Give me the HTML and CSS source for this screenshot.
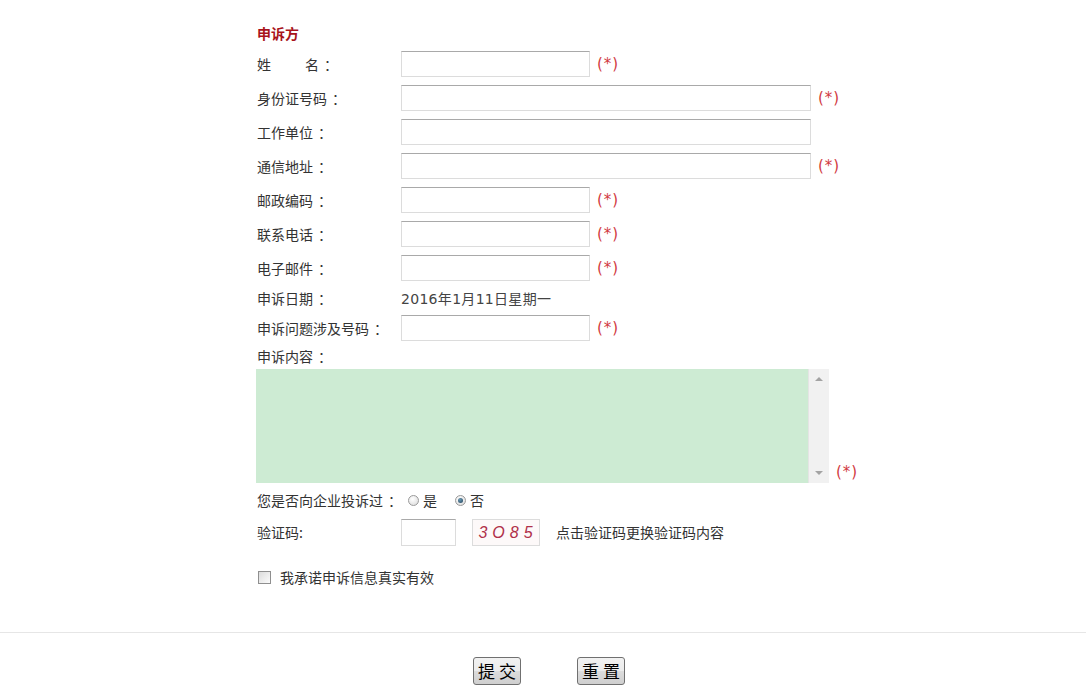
FILE: index.html
```html
<!DOCTYPE html>
<html lang="zh-CN">
<head>
<meta charset="utf-8">
<title>申诉方</title>
<link rel="stylesheet" href="styles.css">
</head>
<body>
<div class="form">
  <h2 class="title">申诉方</h2>
  <div class="row"><span class="label"><span class="xing">姓</span>名<span class="c">：</span></span><input class="inp short" type="text"><span class="req">(*)</span></div>
  <div class="row"><span class="label">身份证号码<span class="c">：</span></span><input class="inp long" type="text"><span class="req">(*)</span></div>
  <div class="row"><span class="label">工作单位<span class="c">：</span></span><input class="inp long" type="text"></div>
  <div class="row"><span class="label">通信地址<span class="c">：</span></span><input class="inp long" type="text"><span class="req">(*)</span></div>
  <div class="row"><span class="label">邮政编码<span class="c">：</span></span><input class="inp short" type="text"><span class="req">(*)</span></div>
  <div class="row"><span class="label">联系电话<span class="c">：</span></span><input class="inp short" type="text"><span class="req">(*)</span></div>
  <div class="row"><span class="label">电子邮件<span class="c">：</span></span><input class="inp short" type="text"><span class="req">(*)</span></div>
  <div class="row date-row"><span class="label">申诉日期<span class="c">：</span></span><span class="date">2016年1月11日星期一</span></div>
  <div class="row"><span class="label">申诉问题涉及号码<span class="c">：</span></span><input class="inp short" type="text"><span class="req">(*)</span></div>
  <div class="content-label">申诉内容<span class="c">：</span></div>
  <div class="content-row">
    <div class="area-wrap">
      <textarea class="area"></textarea>
      <div class="scrollbar"><span class="arrow up"></span><span class="arrow down"></span></div>
    </div>
    <span class="req area-req">(*)</span>
  </div>
  <div class="radio-row">
    <span>您是否向企业投诉过<span class="c">：</span></span>
    <span class="radio"></span><span class="opt">是</span>
    <span class="radio checked"></span><span>否</span>
  </div>
  <div class="row captcha-row"><span class="label">验证码:</span><input class="inp code" type="text"><span class="captcha">3O85</span><span class="hint">点击验证码更换验证码内容</span></div>
  <div class="agree"><span class="checkbox"></span><span>我承诺申诉信息真实有效</span></div>
</div>
<div class="footer">
  <button class="btn" type="button">提 交</button>
  <button class="btn" type="button">重 置</button>
</div>
</body>
</html>
```
FILE: styles.css
```css
html, body {
  margin: 0;
  padding: 0;
  background: #fff;
}
body {
  font-family: "Noto Sans CJK SC", "Liberation Sans", sans-serif;
  font-size: 14px;
  color: #333;
}
.c {
  display: inline-block;
  padding-left: 5px;
}
.form {
  width: 572px;
  margin: 0 auto;
  padding-top: 20px;
}
.title {
  margin: 0;
  height: 27px;
  line-height: 27px;
  font-size: 14px;
  font-weight: bold;
  color: #a8131b;
}
.row {
  display: flex;
  align-items: center;
  height: 34px;
}
.label {
  width: 144px;
  flex: none;
  line-height: 20px;
  white-space: nowrap;
}
.xing {
  display: inline-block;
  width: 48px;
}
.inp {
  flex: none;
  box-sizing: border-box;
  height: 26px;
  border: 1px solid #dcdcdc;
  border-top-color: #a9a9a9;
  background: #fff;
  padding: 0 3px;
  margin: 0;
  font: inherit;
}
.short { width: 189px; }
.long { width: 410px; }
.req {
  flex: none;
  color: #d13a3f;
  margin-left: 7px;
  font-size: 15px;
  font-family: "DejaVu Sans", sans-serif;
  letter-spacing: 1px;
  white-space: nowrap;
}
.date-row { height: 26px; }
.date {
  color: #444;
  font-family: "DejaVu Sans", "Noto Sans CJK SC", sans-serif;
  font-size: 14px;
  letter-spacing: 0.3px;
}
.content-label {
  height: 24px;
  line-height: 22px;
}
.content-row {
  display: flex;
  align-items: flex-end;
  margin-left: -1px;
  width: 640px;
}
.area-wrap {
  flex: none;
  display: flex;
  height: 114px;
  width: 573px;
}
.area {
  box-sizing: border-box;
  flex: 1;
  height: 114px;
  margin: 0;
  border: none;
  background: #cdebd3;
  resize: none;
  padding: 2px;
  font: inherit;
}
.scrollbar {
  flex: none;
  width: 21px;
  background: #f1f1f1;
  border-left: 1px solid #e4e4e4;
  box-sizing: border-box;
  display: flex;
  flex-direction: column;
  justify-content: space-between;
  align-items: center;
  padding: 8px 0;
}
.arrow {
  width: 0;
  height: 0;
  border-left: 4px solid transparent;
  border-right: 4px solid transparent;
}
.arrow.up { border-bottom: 4px solid #a3a3a3; }
.arrow.down { border-top: 4px solid #a3a3a3; }
.area-req {
  margin-left: 7px;
  line-height: 20px;
  margin-bottom: 1px;
}
.radio-row {
  display: flex;
  align-items: center;
  height: 33px;
}
.radio {
  box-sizing: border-box;
  width: 11px;
  height: 11px;
  border-radius: 50%;
  border: 1px solid #9a9a9a;
  background: radial-gradient(circle at 40% 35%, #fff, #d8d8d8);
  margin: 2px 4px 0 6px;
  display: flex;
  align-items: center;
  justify-content: center;
}
.radio.checked {
  margin-left: 18px;
  margin-right: 4px;
}
.radio.checked::after {
  content: "";
  width: 5px;
  height: 5px;
  border-radius: 50%;
  background: radial-gradient(circle at 40% 35%, #6a9ab6, #1f3f56);
}
.captcha-row { height: 32px; }
.code { width: 55px; height: 27px; }
.captcha {
  flex: none;
  box-sizing: border-box;
  width: 68px;
  height: 27px;
  margin-left: 16px;
  border: 1px solid #dcdcdc;
  background: #fdf9f9;
  color: #b0304a;
  font-family: "Liberation Sans", sans-serif;
  font-style: italic;
  font-size: 16px;
  letter-spacing: 5px;
  text-indent: 4px;
  text-align: center;
  line-height: 25px;
}
.hint { margin-left: 16px; }
.agree {
  display: flex;
  align-items: center;
  margin-top: 16px;
  height: 26px;
}
.checkbox {
  box-sizing: border-box;
  width: 13px;
  height: 13px;
  border: 1px solid #8f8f8f;
  background: linear-gradient(135deg, #dcdcdc, #fbfbfb);
  margin: 1px 9px 0 1px;
}
.footer {
  margin-top: 42px;
  border-top: 1px solid #e6e6e6;
  display: flex;
  justify-content: center;
  gap: 56px;
  padding: 24px 0 0 12px;
}
.btn {
  box-sizing: border-box;
  width: 48px;
  height: 28px;
  padding: 0;
  border: 1px solid #707070;
  border-radius: 3px;
  background: linear-gradient(#f2f2f2, #ebebeb 50%, #dcdcdc 51%, #cfcfcf);
  font-family: "Noto Sans CJK SC", sans-serif;
  font-size: 17px;
  color: #000;
  line-height: 24px;
}
```
